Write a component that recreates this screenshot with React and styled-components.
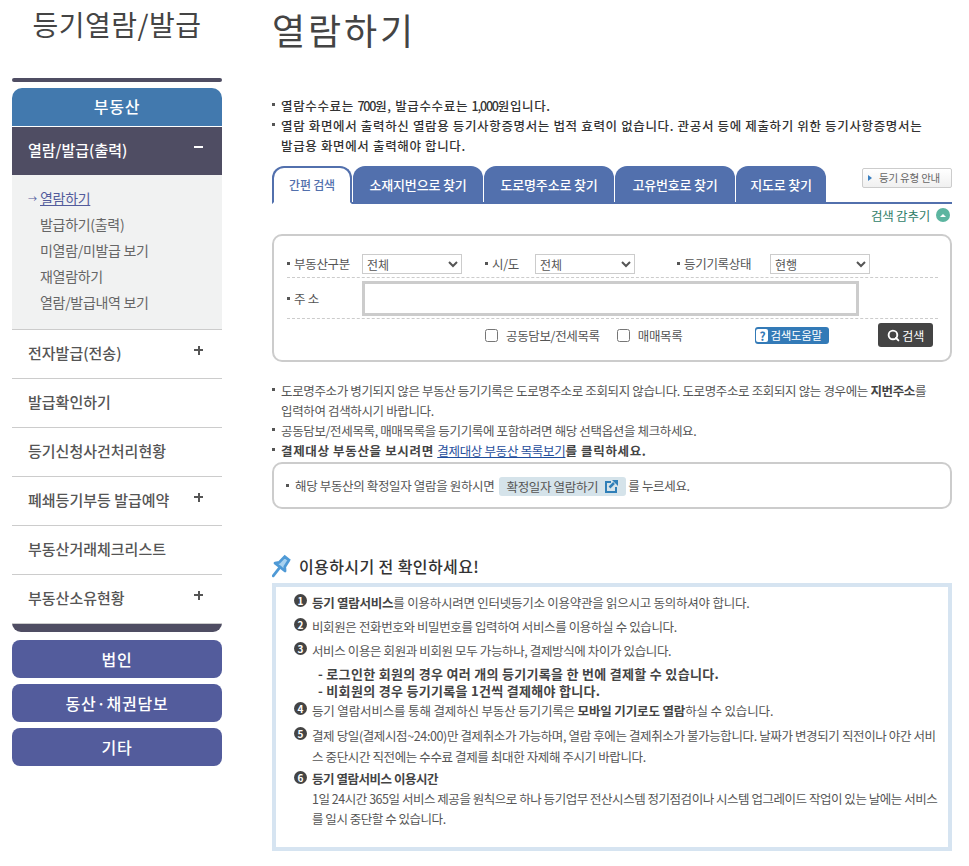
import React from 'react'
import styled, { createGlobalStyle } from 'styled-components'
import { Search } from 'lucide-react'

const Global = createGlobalStyle`
  html, body { margin: 0; padding: 0; background: #fff; }
  body { font-family: "Noto Sans CJK KR", "Noto Sans", sans-serif; color: #444; }
  * { box-sizing: border-box; }
  ul { list-style: none; margin: 0; padding: 0; }
`

const Page = styled.div`
  width: 969px;
  display: flex;
  gap: 50px;
  padding: 0 17px 16px 12px;
`

const Side = styled.aside`
  width: 210px;
  flex: none;
`
const SideTitle = styled.h2`
  margin: 0;
  height: 78px;
  padding-top: 2px;
  font-size: 28px;
  line-height: 44px;
  font-weight: 400;
  letter-spacing: 0.5px;
  text-align: center;
  color: #444;
`
const TopBar = styled.div`
  height: 4px;
  border-radius: 2px;
  background: #4f4d63;
  margin-bottom: 6px;
`
const SideHead = styled.div`
  height: 38px;
  border-radius: 10px 10px 0 0;
  background: #4279ae;
  margin-bottom: 1px;
  color: #fff;
  font-size: 16px;
  line-height: 37px;
  font-weight: 500;
  letter-spacing: 0.8px;
  text-align: center;
`
const MenuRow = styled.div`
  height: ${p => p.$active ? '48px' : '49px'};
  padding: 0 16px 4px;
  display: flex;
  justify-content: space-between;
  align-items: center;
  font-size: 15px;
  font-weight: 500;
  letter-spacing: 0;
  color: ${p => p.$active ? '#fff' : '#555'};
  background: ${p => p.$active ? '#4f4d63' : '#fff'};
  border-bottom: ${p => p.$active ? 'none' : '1px solid #ccc'};
`
const Sign = styled.span`
  width: 9px;
  height: 9px;
  margin: 0 3px 4px 0;
  display: block;
  background:
    linear-gradient(currentColor, currentColor) center / 9px 2px no-repeat,
    ${p => p.$open ? 'none' : 'linear-gradient(currentColor, currentColor) center / 2px 9px no-repeat'};
`
const SubMenu = styled.ul`
  background: #f1f2f2;
  border-bottom: 1px solid #ccc;
  padding: 11px 0 13px 16px;
`
const SubItem = styled.li`
  height: 26px;
  line-height: 25px;
  font-size: 14px;
  letter-spacing: -0.3px;
  color: ${p => p.$active ? '#535c9c' : '#666'};
  padding-left: 12px;
  position: relative;
  a { color: inherit; text-decoration: underline; }
`
const Arrow = styled.span`
  position: absolute;
  left: 0;
  top: 0;
  font-size: 9px;
`
const SideFoot = styled.div`
  height: 9px;
  margin-top: -1px;
  border-top: 1px solid #ccc;
  border-radius: 0 0 10px 10px;
  background: #4f4d63;
  margin-bottom: 8px;
`
const SideButton = styled.div`
  height: 38px;
  margin-bottom: 6px;
  border-radius: 8px;
  background: #535c9c;
  color: #fff;
  font-size: 16px;
  font-weight: 500;
  letter-spacing: 0.8px;
  line-height: 38px;
  text-align: center;
`

const Main = styled.main`
  width: 680px;
  flex: none;
`
const Title = styled.h1`
  margin: 0;
  height: 96px;
  padding-top: 4px;
  font-size: 36px;
  line-height: 50px;
  font-weight: 400;
  letter-spacing: 0.08em;
  color: #444;
`
const NoteList = styled.ul``
const Note = styled.li`
  display: flex;
  gap: 6px;
  font-size: 12.5px;
  line-height: 20px;
  letter-spacing: ${p => p.$bold ? '0.65px' : '-0.36px'};
  font-weight: ${p => p.$bold ? 500 : 400};
  color: ${p => p.$bold ? '#333' : '#555'};
  &::before {
    content: "";
    flex: none;
    width: 3px;
    height: 3px;
    margin-top: 7px;
    background: #555;
  }
  b { font-weight: 700; color: #444; }
  a { color: #1f4e9c; text-decoration: underline; font-weight: 400; letter-spacing: -0.3px; }
`
const Digits = styled.span`
  letter-spacing: -1.2px;
`
const TabRow = styled.div`
  height: 38px;
  margin-top: 10px;
  display: flex;
  align-items: flex-end;
  gap: 1px;
  border-bottom: 2px solid #5270ad;
`
const Tab = styled.div`
  width: ${p => p.$w}px;
  height: ${p => p.$active ? '38px' : '36px'};
  margin-bottom: ${p => p.$active ? '-2px' : '0'};
  border-radius: 12px 12px 0 0;
  border: ${p => p.$active ? '2px solid #5270ad' : 'none'};
  border-bottom: ${p => p.$active ? '2px solid #fff' : 'none'};
  background: ${p => p.$active ? '#fff' : '#5270ad'};
  color: ${p => p.$active ? '#5270ad' : '#fff'};
  font-size: ${p => p.$active ? '12px' : '13px'};
  font-weight: 500;
  letter-spacing: -0.2px;
  line-height: ${p => p.$active ? '34px' : '38px'};
  text-align: center;
`
const GuideButton = styled.div`
  width: 90px;
  height: 20px;
  margin: 0 0 14px auto;
  align-self: flex-end;
  border: 1px solid #ccc;
  border-radius: 2px;
  background: linear-gradient(#fff, #f0f0f0);
  color: #666;
  font-size: 10.5px;
  letter-spacing: -0.2px;
  line-height: 18px;
  display: flex;
  align-items: center;
  gap: 7px;
  padding-left: 5px;
  &::before {
    content: "";
    border-left: 4px solid #3a7fc0;
    border-top: 3px solid transparent;
    border-bottom: 3px solid transparent;
  }
`
const Toggle = styled.div`
  height: 30px;
  padding-bottom: 8px;
  display: flex;
  justify-content: flex-end;
  align-items: center;
  gap: 6px;
  font-size: 12.5px;
  letter-spacing: -0.2px;
  color: #2f7d68;
`
const ToggleDot = styled.span`
  width: 14px;
  height: 14px;
  margin-right: 2px;
  border-radius: 50%;
  background: #5cb5a0;
  display: flex;
  align-items: center;
  justify-content: center;
  &::before {
    content: "";
    border-bottom: 3px solid #fff;
    border-left: 3px solid transparent;
    border-right: 3px solid transparent;
  }
`
const SearchBox = styled.div`
  height: 128px;
  border: 2px solid #ccc;
  border-radius: 10px;
  padding: 14px 12px 0 13px;
  margin-bottom: 19px;
`
const FieldRow = styled.div`
  height: ${p => p.$h}px;
  display: flex;
  align-items: center;
  border-bottom: ${p => p.$last ? 'none' : '1px dashed #ccc'};
`
const Label = styled.label`
  width: ${p => p.$w}px;
  flex: none;
  display: flex;
  align-items: center;
  gap: 4px;
  font-size: 12.5px;
  letter-spacing: -0.3px;
  color: #555;
  &::before {
    content: "";
    width: 3px;
    height: 3px;
    background: #555;
  }
`
const Spacer = styled.span`
  width: ${p => p.$w}px;
  flex: none;
`
const Select = styled.select`
  width: 100px;
  height: 20px;
  flex: none;
  margin-right: ${p => p.$mr || 0}px;
  padding: 0;
  border: 1px solid #ccc;
  background: #fff;
  font-family: inherit;
  font-size: 12px;
  color: #555;
`
const Address = styled.input`
  width: 497px;
  height: 35px;
  border: 3px solid #ccc;
  background: #fff;
`
const Check = styled.label`
  display: flex;
  align-items: center;
  gap: 8px;
  margin-right: ${p => p.$mr}px;
  font-size: 12.5px;
  letter-spacing: -0.35px;
  color: #555;
  input { margin: 0; width: 13px; height: 13px; }
`
const HelpButton = styled.div`
  width: 74px;
  height: 17px;
  margin-right: 49px;
  border-radius: 3px;
  background: #337ab7;
  color: #fff;
  font-size: 11.5px;
  letter-spacing: -0.3px;
  display: flex;
  align-items: center;
  gap: 2px;
  padding-left: 1px;
`
const HelpMark = styled.span`
  width: 12px;
  height: 13px;
  border-radius: 2px;
  background: #fff;
  color: #337ab7;
  font-size: 12px;
  font-weight: 700;
  line-height: 13px;
  text-align: center;
`
const SearchButton = styled.div`
  width: 55px;
  height: 24px;
  border-radius: 3px;
  background: #444;
  color: #fff;
  font-size: 12px;
  display: flex;
  align-items: center;
  justify-content: center;
  gap: 2px;
`
const InfoBox = styled.div`
  height: 47px;
  margin-top: 1px;
  border: 2px solid #ccc;
  border-radius: 10px;
  padding: 0 12px;
  display: flex;
  align-items: center;
  font-size: 12.5px;
  letter-spacing: -0.35px;
  color: #555;
  &::before {
    content: "";
    width: 3px;
    height: 3px;
    margin-right: 6px;
    background: #555;
  }
`
const ConfirmButton = styled.span`
  height: 19px;
  width: 127px;
  margin: 2px 2px 0 5px;
  border-radius: 3px;
  background: #d5e3ea;
  display: flex;
  align-items: center;
  justify-content: center;
  gap: 6px;
  color: #555;
`
const CheckHead = styled.h3`
  margin: 44px 0 0;
  height: 26px;
  display: flex;
  align-items: center;
  gap: 8px;
  font-size: 16px;
  font-weight: 500;
  letter-spacing: 0.4px;
  color: #333;
`
const GuideBox = styled.div`
  height: 268px;
  margin-top: 4px;
  border: 4px solid #d6e4f1;
  padding: 5px 0 0 18px;
  font-size: 12.5px;
  color: #555;
`
const GuideItem = styled.div`
  display: flex;
  gap: 5px;
  margin-bottom: ${p => p.$mb || 0}px;
  line-height: 21px;
  letter-spacing: ${p => p.$ls}px;
  white-space: nowrap;
  b { font-weight: 700; color: #444; }
`
const Badge = styled.span`
  flex: none;
  width: 13px;
  height: 13px;
  margin-top: 2px;
  border-radius: 50%;
  background: #444;
  color: #fff;
  font-size: 10px;
  font-weight: 700;
  line-height: 13px;
  letter-spacing: 0;
  text-align: center;
`
const Sub = styled.div`
  padding-left: 24px;
  font-weight: 700;
  font-size: 13px;
  letter-spacing: 0.3px;
  line-height: 17px;
  color: #444;
`
const SubWrap = styled.div`
  margin: 4px 0 1px;
`
const Line = styled.div`
  line-height: 20px;
`

const Pin = () => (
  <svg width="19" height="24" viewBox="-12 -14 24 30">
    <g transform="rotate(38)" fill="#a9d2f0" stroke="#4f9ad6" strokeWidth="3.5" strokeLinejoin="round">
      <path d="M-5 -11h10M-3.500 -11l-1 10-3.500 4h16l-3.500-4-1-10z" />
      <path d="M0 3v14" strokeLinecap="round" />
    </g>
  </svg>
)

const OutLink = () => (
  <svg width="15" height="15" viewBox="0 0 15 15" fill="none">
    <path d="M7 3H2v10h10V8" stroke="#2f7fb8" strokeWidth="2" />
    <path d="M5.500 8.500L10 4" stroke="#2f7fb8" strokeWidth="2.500" />
    <path d="M8 1h6v6z" fill="#2f7fb8" />
  </svg>
)

const menus = [
  { name: '전자발급(전송)', plus: true },
  { name: '발급확인하기' },
  { name: '등기신청사건처리현황' },
  { name: '폐쇄등기부등 발급예약', plus: true },
  { name: '부동산거래체크리스트' },
  { name: '부동산소유현황', plus: true }
]

export default function App() {
  return (
    <Page>
      <Global />
      <Side>
        <SideTitle>등기열람/발급</SideTitle>
        <TopBar />
        <SideHead>부동산</SideHead>
        <MenuRow $active>열람/발급(출력)<Sign $open /></MenuRow>
        <SubMenu>
          <SubItem $active><Arrow>→</Arrow><a>열람하기</a></SubItem>
          <SubItem>발급하기(출력)</SubItem>
          <SubItem>미열람/미발급 보기</SubItem>
          <SubItem>재열람하기</SubItem>
          <SubItem>열람/발급내역 보기</SubItem>
        </SubMenu>
        {menus.map(m => (
          <MenuRow key={m.name}>{m.name}{m.plus && <Sign />}</MenuRow>
        ))}
        <SideFoot />
        <SideButton>법인</SideButton>
        <SideButton>동산·채권담보</SideButton>
        <SideButton>기타</SideButton>
      </Side>
      <Main>
        <Title>열람하기</Title>
        <NoteList>
          <Note $bold><span>열람수수료는 <Digits>700</Digits>원, 발급수수료는 <Digits>1,000</Digits>원입니다.</span></Note>
          <Note $bold><span>열람 화면에서 출력하신 열람용 등기사항증명서는 법적 효력이 없습니다. 관공서 등에 제출하기 위한 등기사항증명서는<br />발급용 화면에서 출력해야 합니다.</span></Note>
        </NoteList>
        <TabRow>
          <Tab $active $w={80}>간편 검색</Tab>
          <Tab $w={130}>소재지번으로 찾기</Tab>
          <Tab $w={130}>도로명주소로 찾기</Tab>
          <Tab $w={120}>고유번호로 찾기</Tab>
          <Tab $w={90}>지도로 찾기</Tab>
          <GuideButton>등기 유형 안내</GuideButton>
        </TabRow>
        <Toggle>검색 감추기<ToggleDot /></Toggle>
        <SearchBox>
          <FieldRow $h={28}>
            <Label $w={75}>부동산구분</Label>
            <Select $mr={23}><option>전체</option></Select>
            <Label $w={50}>시/도</Label>
            <Select $mr={42}><option>전체</option></Select>
            <Label $w={93}>등기기록상태</Label>
            <Select><option>현행</option></Select>
          </FieldRow>
          <FieldRow $h={41}>
            <Label $w={75}>주 소</Label>
            <Address />
          </FieldRow>
          <FieldRow $h={32} $last>
            <Spacer $w={198} />
            <Check $mr={17}><input type="checkbox" />공동담보/전세목록</Check>
            <Check $mr={73}><input type="checkbox" />매매목록</Check>
            <HelpButton><HelpMark>?</HelpMark>검색도움말</HelpButton>
            <SearchButton><Search size={13} strokeWidth={3.5} />검색</SearchButton>
          </FieldRow>
        </SearchBox>
        <NoteList>
          <Note><span>도로명주소가 병기되지 않은 부동산 등기기록은 도로명주소로 조회되지 않습니다. 도로명주소로 조회되지 않는 경우에는 <b>지번주소</b>를<br />입력하여 검색하시기 바랍니다.</span></Note>
          <Note><span>공동담보/전세목록, 매매목록을 등기기록에 포함하려면 해당 선택옵션을 체크하세요.</span></Note>
          <Note $bold><span><b>결제대상 부동산을 보시려면</b> <a>결제대상 부동산 목록보기</a><b>를 클릭하세요.</b></span></Note>
        </NoteList>
        <InfoBox>
          해당 부동산의 확정일자 열람을 원하시면
          <ConfirmButton>확정일자 열람하기 <OutLink /></ConfirmButton>
          를 누르세요.
        </InfoBox>
        <CheckHead><Pin />이용하시기 전 확인하세요!</CheckHead>
        <GuideBox>
          <GuideItem $mb={3} $ls={-0.25}><Badge>1</Badge><span><b>등기 열람서비스</b>를 이용하시려면 인터넷등기소 이용약관을 읽으시고 동의하셔야 합니다.</span></GuideItem>
          <GuideItem $mb={3} $ls={-0.38}><Badge>2</Badge><span>비회원은 전화번호와 비밀번호를 입력하여 서비스를 이용하실 수 있습니다.</span></GuideItem>
          <GuideItem $ls={-0.38}><Badge>3</Badge><span>서비스 이용은 회원과 비회원 모두 가능하나, 결제방식에 차이가 있습니다.</span></GuideItem>
          <SubWrap>
            <Sub>- 로그인한 회원의 경우 여러 개의 등기기록을 한 번에 결제할 수 있습니다.</Sub>
            <Sub>- 비회원의 경우 등기기록을 1건씩 결제해야 합니다.</Sub>
          </SubWrap>
          <GuideItem $mb={4} $ls={-0.15}><Badge>4</Badge><span>등기 열람서비스를 통해 결제하신 부동산 등기기록은 <b>모바일 기기로도 열람</b>하실 수 있습니다.</span></GuideItem>
          <GuideItem $mb={2} $ls={-0.38}><Badge>5</Badge><span>결제 당일(결제시점~24:00)만 결제취소가 가능하며, 열람 후에는 결제취소가 불가능합니다. 날짜가 변경되기 직전이나 야간 서비<br />스 중단시간 직전에는 수수료 결제를 최대한 자제해 주시기 바랍니다.</span></GuideItem>
          <GuideItem $ls={-0.47}><Badge>6</Badge>
            <div>
              <Line><b>등기 열람서비스 이용시간</b></Line>
              <Line>1일 24시간 365일 서비스 제공을 원칙으로 하나 등기업무 전산시스템 정기점검이나 시스템 업그레이드 작업이 있는 날에는 서비스<br />를 일시 중단할 수 있습니다.</Line>
            </div>
          </GuideItem>
        </GuideBox>
      </Main>
    </Page>
  )
}
